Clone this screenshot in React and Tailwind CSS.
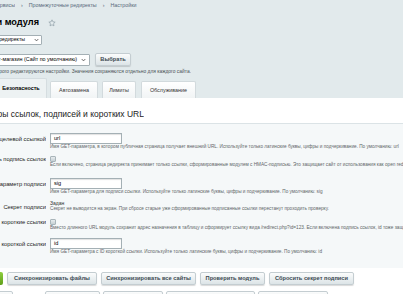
import React from 'react';

const Chevron = () => (
  <svg width="5" height="4" viewBox="0 0 5 4" className="shrink-0">
    <path d="M0.7 1 L2.5 2.9 L4.3 1" fill="none" stroke="#333" strokeWidth="0.7" />
  </svg>
);

const StarOutline = () => (
  <svg width="8" height="8" viewBox="0 0 24 24" className="shrink-0">
    <path
      d="M12 2.5l2.9 6.1 6.6.8-4.9 4.6 1.3 6.6L12 17.3l-5.9 3.3 1.3-6.6-4.9-4.6 6.6-.8z"
      fill="none"
      stroke="#8b9ba4"
      strokeWidth="2"
      strokeLinejoin="round"
    />
  </svg>
);

const Checkbox = () => (
  <div className="w-[6px] h-[6px] rounded-[1px] border border-[#a9b5ba] bg-gradient-to-b from-[#e7ecee] to-[#c6d0d4]" />
);

const TextInput = ({ value }) => (
  <div className="w-[72px] h-[11px] bg-white border border-[#a4b0b5] shadow-[inset_0_1px_1px_rgba(0,0,0,0.12)] flex items-center px-[3px] text-[5.6px] text-black">
    {value}
  </div>
);

const Hint = ({ children }) => (
  <div className="whitespace-nowrap text-[4.7px] leading-[6px] text-[#5f6668]">{children}</div>
);

const Btn = ({ children, w }) => (
  <div
    className={`${w} h-[13px] shrink-0 rounded-[2px] border border-[#c4cdd1] bg-gradient-to-b from-[#fbfcfc] to-[#dce4e7] shadow-[0_1px_1px_rgba(0,0,0,0.15)] flex items-center justify-center text-[5.7px] font-bold text-[#3d4a52] whitespace-nowrap`}
  >
    {children}
  </div>
);

const rows = [
  {
    label: 'Имя параметра с целевой ссылкой',
    labelPad: 'pt-[3px]',
    gap: 'mt-[9px]',
    field: <TextInput value="url" />,
    hint: 'Имя GET-параметра, в котором публичная страница получает внешний URL. Используйте только латинские буквы, цифры и подчеркивание. По умолчанию: url',
  },
  {
    label: 'Включить подпись ссылок',
    labelPad: 'pt-0',
    gap: 'mt-[6px]',
    field: <Checkbox />,
    hint: 'Если включено, страница редиректа принимает только ссылки, сформированные модулем с HMAC-подписью. Это защищает сайт от использования как open redirect.',
  },
  {
    label: 'Параметр подписи',
    labelPad: 'pt-[3px]',
    gap: 'mt-[10px]',
    field: <TextInput value="sig" />,
    hint: 'Имя GET-параметра для подписи ссылки. Используйте только латинские буквы, цифры и подчеркивание. По умолчанию: sig',
  },
  {
    label: 'Секрет подписи',
    labelPad: 'pt-[4px]',
    gap: 'mt-[5px]',
    field: <div className="text-[5px] leading-[6px] text-[#333]">Задан</div>,
    hint: 'Секрет не выводится на экран. При сбросе старые уже сформированные подписанные ссылки перестанут проходить проверку.',
  },
  {
    label: 'Использовать короткие ссылки',
    labelPad: 'pt-0',
    gap: 'mt-[7px]',
    field: <Checkbox />,
    hint: 'Вместо длинного URL модуль сохранит адрес назначения в таблицу и сформирует ссылку вида /redirect.php?id=123. Если включена подпись ссылок, id тоже защищается подписью.',
  },
  {
    label: 'Параметр ID короткой ссылки',
    labelPad: 'pt-[3px]',
    gap: 'mt-[7px]',
    field: <TextInput value="id" />,
    hint: 'Имя GET-параметра с ID короткой ссылки. Используйте только латинские буквы, цифры и подчеркивание. По умолчанию: id',
  },
];

export default function App() {
  return (
    <div className="w-[403px] h-[294px] overflow-hidden bg-[#e2eaec] font-['Liberation_Sans',Arial,sans-serif]">
      {/* breadcrumbs */}
      <div className="h-[12px] flex items-center text-[5.3px] text-[#56697a] whitespace-nowrap">
        <div className="w-[15px] flex justify-end overflow-hidden">
          <span className="shrink-0">Сервисы</span>
        </div>
        <span className="mx-[6px]">›</span>
        <span>Промежуточные редиректы</span>
        <span className="mx-[6px]">›</span>
        <span>Настройки</span>
      </div>

      {/* title */}
      <div className="h-[21px] flex items-center gap-[9px]">
        <div className="w-[39px] flex justify-end overflow-hidden">
          <span className="shrink-0 text-[9.2px] font-bold text-black whitespace-nowrap">Настройки модуля</span>
        </div>
        <StarOutline />
      </div>

      {/* module select */}
      <div className="mt-[2px] w-[42px] flex justify-end overflow-hidden">
        <div className="shrink-0 h-[10px] bg-white border border-[#a4b0b5] rounded-[1px] flex items-center gap-[9px] pl-[3px] pr-[2px] text-[5.2px] text-black whitespace-nowrap">
          Промежуточные редиректы
          <Chevron />
        </div>
      </div>

      {/* site select */}
      <div className="mt-[8px] flex items-center gap-[5px]">
        <div className="w-[90px] flex justify-end overflow-hidden">
          <div className="shrink-0 h-[12px] bg-white border border-[#a4b0b5] rounded-[1px] flex items-center gap-[4px] pl-[3px] pr-[3px] text-[5.4px] text-black whitespace-nowrap">
            Интернет-магазин (Сайт по умолчанию)
            <Chevron />
          </div>
        </div>
        <Btn w="w-[36px]">Выбрать</Btn>
      </div>
      <div className="mt-[2px] w-[191px] flex justify-end overflow-hidden h-[7px] items-center">
        <span className="shrink-0 whitespace-nowrap text-[4.9px] text-[#4a5256]">
          Выберите сайт, для которого редактируются настройки. Значения сохраняются отдельно для каждого сайта.
        </span>
      </div>

      {/* tabs */}
      <div className="mt-[3px] h-[20px] flex items-end gap-[3px] text-[5.4px] font-bold text-[#333] whitespace-nowrap">
        <div className="w-[47px] flex justify-end overflow-hidden">
          <div className="shrink-0 w-[52px] h-[20px] bg-[#edf2f3] rounded-t-[2px] border border-b-0 border-[#d5dde0] flex items-center justify-center text-black">
            Безопасность
          </div>
        </div>
        <div className="w-[48px] h-[17px] bg-gradient-to-b from-white to-[#f1f4f5] border border-b-0 border-[#d2dadd] rounded-t-[2px] flex items-center justify-center font-normal">
          Автозамена
        </div>
        <div className="w-[34px] h-[17px] ml-[1px] bg-gradient-to-b from-white to-[#f1f4f5] border border-b-0 border-[#d2dadd] rounded-t-[2px] flex items-center justify-center font-normal">
          Лимиты
        </div>
        <div className="w-[55px] h-[17px] ml-[2px] bg-gradient-to-b from-white to-[#f1f4f5] border border-b-0 border-[#d2dadd] rounded-t-[2px] flex items-center justify-center font-normal">
          Обслуживание
        </div>
      </div>

      {/* content header */}
      <div className="h-[26px] bg-white border-b border-[#dbe3e6] pt-[11px]">
        <div className="w-[144px] flex justify-end overflow-hidden">
          <span className="shrink-0 whitespace-nowrap text-[8.5px] leading-[10px] text-[#222]">
            Параметры ссылок, подписей и коротких URL
          </span>
        </div>
      </div>

      {/* form */}
      <div className="h-[144px] bg-[#f5f8f9] overflow-hidden">
        {rows.map((r, i) => (
          <div key={i} className={`${r.gap} grid grid-cols-[46px_1fr] gap-x-[4px]`}>
            <div className={`${r.labelPad} flex justify-end overflow-hidden`}>
              <span className="shrink-0 whitespace-nowrap text-[5.8px] leading-[7px] text-[#222]">{r.label}</span>
            </div>
            <div className="min-w-0">
              {r.field}
              <Hint>{r.hint}</Hint>
            </div>
          </div>
        ))}
      </div>

      {/* buttons */}
      <div className="bg-white pt-[4px] pb-[4px]">
        <div className="flex items-center gap-[4px]">
          <div className="w-[3px] overflow-hidden flex justify-end">
            <div className="shrink-0 w-[40px] h-[13px] rounded-[2px] bg-gradient-to-b from-[#8fcf3e] to-[#5f9f1a]" />
          </div>
          <Btn w="w-[90px]">Синхронизировать файлы</Btn>
          <Btn w="w-[95px]">Синхронизировать все сайты</Btn>
          <Btn w="w-[65px]">Проверить модуль</Btn>
          <Btn w="w-[85px]">Сбросить секрет подписи</Btn>
        </div>
        <div className="mt-[6px] flex items-center gap-[3px]">
          <div className="w-[13px] overflow-hidden flex justify-end">
            <Btn w="w-[40px]">Удалить</Btn>
          </div>
          <div className="ml-[26px]" />
          <Btn w="w-[55px]">Экспорт</Btn>
          <Btn w="w-[60px]">Импорт</Btn>
          <Btn w="w-[89px]">Очистить</Btn>
          <Btn w="w-[70px]">Журнал</Btn>
        </div>
      </div>
    </div>
  );
}
